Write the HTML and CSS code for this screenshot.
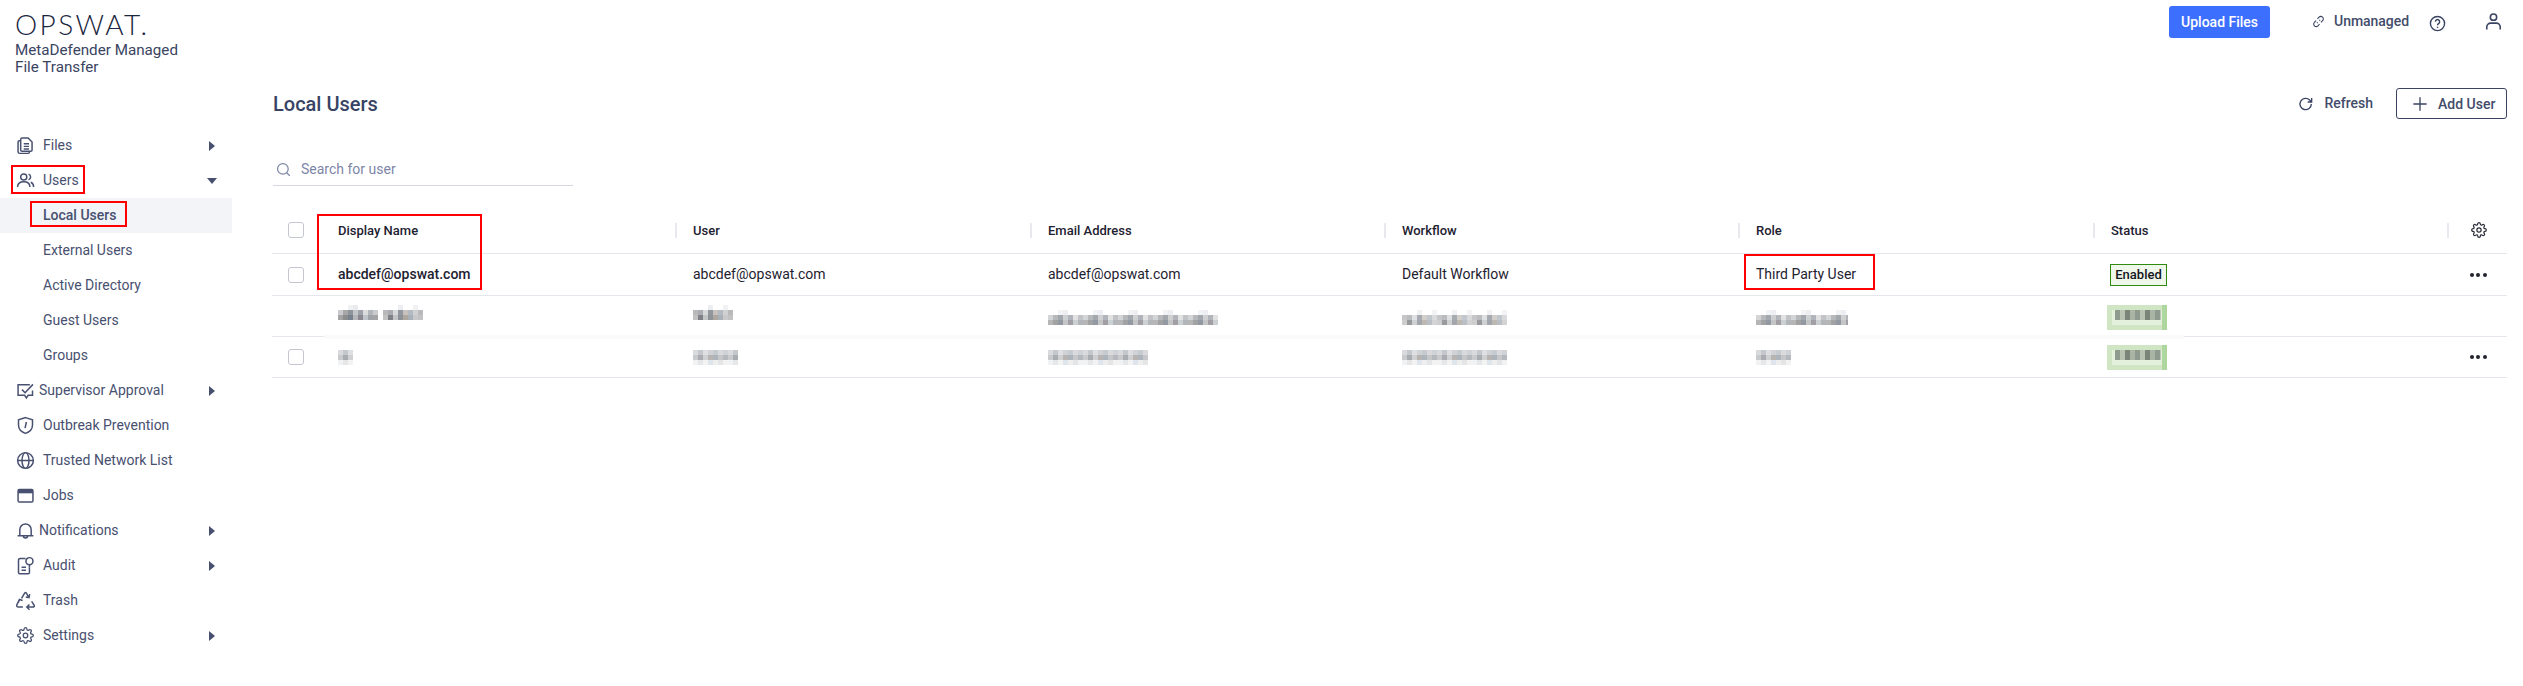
FILE: index.html
```html
<!DOCTYPE html>
<html lang="en">
<head>
<meta charset="utf-8">
<title>Local Users</title>
<link rel="stylesheet" href="styles.css">
</head>
<body>
<svg class="defs" width="0" height="0">
  <symbol id="gear" viewBox="0 0 24 24"><circle cx="12" cy="12" r="3.200"/><path d="M19.400 15a1.650 1.650 0 0 0 .33 1.820l.06.06a2 2 0 0 1 0 2.830 2 2 0 0 1-2.830 0l-.06-.06a1.650 1.650 0 0 0-1.820-.33 1.650 1.650 0 0 0-1 1.510V21a2 2 0 0 1-2 2 2 2 0 0 1-2-2v-.09A1.650 1.650 0 0 0 9 19.400a1.650 1.650 0 0 0-1.820.33l-.06.06a2 2 0 0 1-2.830 0 2 2 0 0 1 0-2.830l.06-.06a1.650 1.650 0 0 0 .33-1.820 1.650 1.650 0 0 0-1.510-1H3a2 2 0 0 1-2-2 2 2 0 0 1 2-2h.09A1.650 1.650 0 0 0 4.600 9a1.650 1.650 0 0 0-.33-1.820l-.06-.06a2 2 0 0 1 0-2.830 2 2 0 0 1 2.830 0l.06.06a1.650 1.650 0 0 0 1.820.33H9a1.650 1.650 0 0 0 1-1.510V3a2 2 0 0 1 2-2 2 2 0 0 1 2 2v.09a1.650 1.650 0 0 0 1 1.510 1.650 1.650 0 0 0 1.820-.33l.06-.06a2 2 0 0 1 2.830 0 2 2 0 0 1 0 2.830l-.06.06a1.650 1.650 0 0 0-.33 1.820V9a1.650 1.650 0 0 0 1.510 1H21a2 2 0 0 1 2 2 2 2 0 0 1-2 2h-.09a1.650 1.650 0 0 0-1.510 1z"/></symbol>
</svg>
<aside class="sidebar">
  <div class="brand">
    <div class="logo">OPSWAT.</div>
    <div class="product">MetaDefender Managed<br>File Transfer</div>
  </div>
  <nav class="nav">
    <a class="item"><svg class="ico" viewBox="0 0 24 24"><path d="M8 3.500h7l4.500 4.500v9a1.500 1.500 0 0 1-1.500 1.500H8A1.500 1.500 0 0 1 6.500 17V5A1.500 1.500 0 0 1 8 3.500z"/><path d="M6.500 6.500H5A1.500 1.500 0 0 0 3.500 8v11A2 2 0 0 0 5.500 21H15a1.500 1.500 0 0 0 1.500-1.500V18.500M10 10h6M10 13h6M10 16h6"/></svg><span>Files</span><i class="caret right"></i></a>
    <a class="item"><svg class="ico" viewBox="0 0 24 24"><circle cx="10" cy="8" r="3.500"/><path d="M3 19.500c0-4 3-6 7-6s7 2 7 6M15.500 4.700a3.500 3.500 0 0 1 0 6.600M18 14c2 .8 3.300 2.600 3.300 5.500"/></svg><span>Users</span><i class="caret down"></i></a>
    <a class="item sub active"><span>Local Users</span></a>
    <a class="item sub"><span>External Users</span></a>
    <a class="item sub"><span>Active Directory</span></a>
    <a class="item sub"><span>Guest Users</span></a>
    <a class="item sub"><span>Groups</span></a>
    <a class="item tight"><svg class="ico" viewBox="0 0 24 24"><path d="M20 12v5.500h-5l-2 3-2-3H3.500V5.500H17"/><path d="M8 11l3.500 3.500L20.500 5"/></svg><span>Supervisor Approval</span><i class="caret right"></i></a>
    <a class="item"><svg class="ico" viewBox="0 0 24 24"><path d="M12 3l8 2.500v6c0 5-3.500 8-8 9.500-4.500-1.500-8-4.500-8-9.500v-6z"/><path d="M13 8l-1.500 7"/></svg><span>Outbreak Prevention</span></a>
    <a class="item"><svg class="ico" viewBox="0 0 24 24"><circle cx="12" cy="12" r="9"/><ellipse cx="12" cy="12" rx="4" ry="9"/><path d="M3 12h18"/></svg><span>Trusted Network List</span></a>
    <a class="item"><svg class="ico" viewBox="0 0 24 24"><rect x="3.500" y="5" width="17" height="14.500" rx="1.500"/><path class="solid" d="M3.500 5h17v4.500h-17z"/></svg><span>Jobs</span></a>
    <a class="item tight"><svg class="ico" viewBox="0 0 24 24"><path d="M3 18h18M5.500 18v-7a6.500 6.500 0 0 1 13 0v7M9.500 18a2.500 2.500 0 0 0 5 0"/></svg><span>Notifications</span><i class="caret right"></i></a>
    <a class="item"><svg class="ico" viewBox="0 0 24 24"><path d="M12 4H6a2 2 0 0 0-2 2v14a1.500 1.500 0 0 0 1.500 1.500H15a1.500 1.500 0 0 0 1.500-1.500v-6M7.500 14h5M7.500 17.500h5"/><circle cx="16.500" cy="7" r="4"/><path d="M16.500 11v3"/></svg><span>Audit</span><i class="caret right"></i></a>
    <a class="item"><svg class="ico" viewBox="0 0 24 24"><path d="M7.500 9.500L11 3.500Q12 2 13 3.500L15.500 8M16.800 4.800L16 8.700L12.300 8M5 11L2 17Q1.500 19.500 4 19.500H9M3.800 14.300L5.200 10.800L8.700 12M19 13L22 17.500Q22.500 19.500 20 19.500H14M16.500 16.500L13.500 19.500L16.500 22.500"/></svg><span>Trash</span></a>
    <a class="item"><svg class="ico gear-nav"><use href="#gear"/></svg><span>Settings</span><i class="caret right"></i></a>
  </nav>
</aside>

<main class="main">
  <header class="topbar">
    <button class="upload">Upload Files</button>
    <span class="status-link"><svg class="small" viewBox="0 0 24 24"><path d="M10 7l3-3a4.500 4.500 0 0 1 6.500 0 4.500 4.500 0 0 1 0 6.500l-3 3M14 17l-3 3a4.500 4.500 0 0 1-6.500 0 4.500 4.500 0 0 1 0-6.500l3-3M9 15l1.500-1.500M13.500 10.500L15 9"/></svg>Unmanaged</span>
    <svg class="help" viewBox="0 0 24 24"><circle cx="12" cy="12" r="10"/><path d="M9 9.500a3 3 0 1 1 4.500 2.600c-1 .6-1.500 1.100-1.500 2.400"/><path class="solid" d="M11 16.500h2v2h-2z"/></svg>
    <svg class="person" viewBox="0 0 24 24"><circle cx="12" cy="6.500" r="4"/><path d="M3.500 22v-3a5 5 0 0 1 5-5h7a5 5 0 0 1 5 5v3"/></svg>
  </header>
  <div class="title-row">
    <h1>Local Users</h1>
    <div class="actions">
      <span class="refresh"><svg class="refresh-ico" viewBox="0 0 24 24"><path d="M20 12a8.500 8.500 0 1 1-2.500-6L20 8.500M20.500 3v6h-6"/></svg>Refresh</span>
      <button class="add"><svg class="plus" viewBox="0 0 24 24"><path d="M12 2v20M2 12h20"/></svg>Add User</button>
    </div>
  </div>
  <div class="search"><svg class="search-ico" viewBox="0 0 24 24"><circle cx="11" cy="11" r="8.500"/><path d="M17 17l5 5"/></svg><span>Search for user</span></div>

  <div class="table">
    <div class="row head">
      <div class="cell check"><i class="box"></i></div>
      <div class="cell first">Display Name</div>
      <div class="cell">User</div>
      <div class="cell">Email Address</div>
      <div class="cell">Workflow</div>
      <div class="cell">Role</div>
      <div class="cell">Status</div>
      <div class="cell tool"><svg class="gear-small"><use href="#gear"/></svg></div>
    </div>
    <div class="row r1">
      <div class="cell check"><i class="box"></i></div>
      <div class="cell first strong">abcdef@opswat.com</div>
      <div class="cell">abcdef@opswat.com</div>
      <div class="cell">abcdef@opswat.com</div>
      <div class="cell">Default Workflow</div>
      <div class="cell">Third Party User</div>
      <div class="cell"><b class="badge">Enabled</b></div>
      <div class="cell tool"><b class="dots"><i></i><i></i><i></i></b></div>
    </div>
    <div class="row r2">
      <div class="cell check"></div>
      <div class="cell first"><i class="mos a w40 high"></i><i class="mos b w40 gap high"></i></div>
      <div class="cell"><i class="mos b w40 high"></i></div>
      <div class="cell"><i class="mos a w170 low"></i></div>
      <div class="cell"><i class="mos b w105 low"></i></div>
      <div class="cell"><i class="mos a w92 low"></i></div>
      <div class="cell"><i class="blur-badge"></i></div>
      <div class="cell tool"></div>
    </div>
    <div class="row r3">
      <div class="cell check"><i class="box"></i></div>
      <div class="cell first"><i class="mos c w15"></i></div>
      <div class="cell"><i class="mos c w45"></i></div>
      <div class="cell"><i class="mos c w100"></i></div>
      <div class="cell"><i class="mos c w105"></i></div>
      <div class="cell"><i class="mos c w35"></i></div>
      <div class="cell"><i class="blur-badge"></i></div>
      <div class="cell tool"><b class="dots"><i></i><i></i><i></i></b></div>
    </div>
  </div>
</main>

<div class="mark m-users"></div>
<div class="mark m-local"></div>
<div class="mark m-name"></div>
<div class="mark m-role"></div>
</body>
</html>
```
FILE: styles.css
```css
* { box-sizing: border-box; }
html, body { margin: 0; height: 100%; }
body {
  display: flex;
  font: 14px/17px Roboto, "Liberation Sans", sans-serif;
  color: #485070;
  background: #fff;
  overflow: hidden;
  position: relative;
}
.defs { position: absolute; }
symbol { fill: none; stroke: currentColor; stroke-width: 1.8; }

/* sidebar */
.sidebar { width: 232px; flex: none; }
.brand { height: 128px; padding: 8px 0 0 15px; }
.logo {
  font: 300 28px/32px Lato, sans-serif;
  letter-spacing: 2.400px;
  color: #1a2540;
}
.product { margin-top: 2px; color: #3a4462; font-size: 15.200px; }
.item {
  display: flex;
  align-items: center;
  height: 35px;
  padding-left: 15px;
  color: #485070;
}
.item span { margin-left: 7px; }
.item.tight span { margin-left: 3px; }
.item.sub { padding-left: 43px; }
.item.sub span { margin-left: 0; }
.item.active { background: #f2f4f8; font-weight: 500; }
.ico {
  width: 21px;
  height: 21px;
  flex: none;
  fill: none;
  stroke: #485070;
  stroke-width: 1.7;
}
.ico.gear-nav { width: 17px; height: 17px; margin: 0 2px; color: #485070; }
.solid { fill: currentColor; stroke: none; color: #485070; }
.caret {
  margin-left: auto;
  width: 0;
  height: 0;
  border-style: solid;
  border-color: transparent;
}
.caret.right { margin-right: 17px; border-width: 5.500px 0 5.500px 6px; border-left-color: #485070; }
.caret.down { margin-right: 15px; border-width: 6px 5.500px 0; border-top-color: #485070; }

/* main */
.main { flex: 1; min-width: 0; padding: 0 16px 0 40px; }
.topbar {
  display: flex;
  align-items: flex-start;
  justify-content: flex-end;
  height: 88px;
  padding-top: 6px;
}
.upload {
  width: 101px;
  height: 32px;
  border: 0;
  border-radius: 3px;
  background: #3d6fff;
  color: #fff;
  font: 500 14px Roboto, sans-serif;
  padding: 0;
}
.status-link {
  display: flex;
  align-items: center;
  margin: 7px 0 0 41px;
  color: #434c6b;
  font-weight: 500;
  letter-spacing: -.05px;
  line-height: 17px;
}
.small { width: 13px; height: 13px; margin-right: 9px; margin-left: 1px; fill: none; stroke: #3a4462; stroke-width: 2; }
.help { width: 17px; height: 17px; margin: 9px 0 0 20px; fill: none; stroke: #3a4462; stroke-width: 2; }
.person { width: 19px; height: 19px; margin: 6px 4px 0 38px; fill: none; stroke: #3a4462; stroke-width: 2; }

.title-row {
  display: flex;
  align-items: flex-start;
  justify-content: space-between;
  height: 64px;
}
h1 {
  margin: 3px 0 0 1px;
  font: 500 20px/26px Roboto, sans-serif;
  color: #384364;
}
.actions { display: flex; align-items: flex-start; }
.refresh {
  display: flex;
  align-items: center;
  height: 31px;
  margin-right: 23px;
  color: #434c6b;
  font-weight: 500;
}
.refresh-ico { width: 16px; height: 16px; margin-right: 10px; fill: none; stroke: #3a4462; stroke-width: 2; }
.add {
  display: flex;
  align-items: center;
  width: 111px;
  height: 31px;
  padding: 0 0 0 15px;
  border: 1px solid #3a4462;
  border-radius: 3px;
  background: #fff;
  color: #434c6b;
  font: 500 14px Roboto, sans-serif;
}
.plus { width: 16px; height: 16px; margin-right: 10px; fill: none; stroke: #3a4462; stroke-width: 2; }

.search {
  display: flex;
  align-items: center;
  width: 300px;
  margin-left: 1px;
  height: 34px;
  padding: 2px 0 0 3px;
  border-bottom: 1px solid #d6d8e0;
  color: #7d86a6;
}
.search-ico { width: 15px; height: 15px; margin-right: 10px; fill: none; stroke: #7d86a6; stroke-width: 2; }

/* table */
.table { margin-top: 28px; color: #1e2130; }
.row {
  display: grid;
  grid-template-columns: 66px 337px 355px 354px 354px 355px 354px 60px;
  align-items: center;
  border-bottom: 1px solid #e6e7ec;
  position: relative;
}
.head { height: 40px; padding-bottom: 7px; font-size: 13px; font-weight: 500; }
.r1 { height: 42px; }
.r2 { height: 41px; }
.r2::after {
  content: "";
  position: absolute;
  left: 52px;
  right: 323px;
  bottom: -3px;
  height: 4px;
  background: #fafafa;
}
.r3 { height: 41px; }
.cell { display: flex; align-items: center; padding-left: 18px; min-width: 0; }
.head .cell:not(.check):not(.first) { border-left: 2px solid #e8e9ee; height: 15px; padding-left: 16px; }
.head .cell.tool:not(.check):not(.first) { padding-left: 22px; }
.cell.check { padding-left: 16px; }
.cell.first { padding-left: 0; }
.cell.first.strong { font-weight: 500; }
.cell.tool { padding-left: 22.500px; }
.box {
  display: block;
  width: 16px;
  height: 16px;
  border: 1px solid #c4c6d2;
  border-radius: 3px;
  background: #fff;
}
.gear-small { width: 16px; height: 16px; color: #2a2d3a; flex: none; }
.badge {
  display: flex;
  align-items: center;
  width: 57px;
  height: 22px;
  margin-left: -1px;
  justify-content: center;
  border: 1px solid #2f8a10;
  background: #eef7ea;
  font-size: 13px;
  font-weight: 500;
  color: #14161e;
}
.dots { display: flex; gap: 2.500px; }
.dots i { width: 4px; height: 4px; border-radius: 50%; background: #22242f; }

/* pixelated (redacted) content */
.mos {
  display: block;
  height: 15px;
  flex: none;
  background-repeat: no-repeat;
  background-size: 100% 5px;
  background-position: 0 0, 0 5px, 0 10px;
}
.mos.high { margin-bottom: 7px; }
.mos.low { margin-top: 3px; opacity: .8; }
.mos.gap { margin-left: 5px; }
.w15 { width: 15px; } .w35 { width: 35px; } .w40 { width: 40px; } .w45 { width: 45px; }
.w92 { width: 92px; } .w100 { width: 100px; } .w105 { width: 105px; } .w170 { width: 170px; }
.mos.a {
  background-image:
    repeating-linear-gradient(90deg, #fff 0 10px, #f0f1f3 10px 15px, #e8eaee 15px 20px, #fff 20px 35px),
    repeating-linear-gradient(90deg, #c9cbce 0 5px, #a6a7a9 5px 10px, #8d939b 10px 15px, #c3c5c8 15px 20px, #9ea2a9 20px 25px, #dcdcdc 25px 30px, #b2b5b9 30px 35px),
    repeating-linear-gradient(90deg, #a4a4a5 0 5px, #8a8c8e 5px 10px, #77808d 10px 15px, #b6b7b9 15px 20px, #8b8690 20px 25px, #bfc5c8 25px 30px, #9fa3a8 30px 35px);
}
.mos.b {
  background-image:
    repeating-linear-gradient(90deg, #fff 0 15px, #eceef1 15px 20px, #fff 20px 30px, #f1f1f3 30px 35px),
    repeating-linear-gradient(90deg, #b9b9bb 0 5px, #a9acb0 5px 10px, #d8d9db 10px 15px, #92969d 15px 20px, #c8c2be 20px 25px, #b3bac2 25px 30px, #d0d1d3 30px 35px),
    repeating-linear-gradient(90deg, #c2c2c3 0 5px, #7f8186 5px 10px, #c4c5c7 10px 15px, #8d9299 15px 20px, #ada79f 20px 25px, #a9b0b8 25px 30px, #c9c9cb 30px 35px);
}
.mos.c {
  background-image:
    repeating-linear-gradient(90deg, #d8dade 0 5px, #c4c7cb 5px 10px, #dddfe2 10px 15px, #d0d2d5 15px 20px, #c6cbd0 20px 25px, #dadadc 25px 30px, #cfd3d8 30px 35px),
    repeating-linear-gradient(90deg, #c9cacc 0 5px, #a9adb2 5px 10px, #cfd0d2 10px 15px, #b7b4b1 15px 20px, #aeb4bb 20px 25px, #c6c7c9 25px 30px, #b5b9be 30px 35px),
    repeating-linear-gradient(90deg, #f1f2f3 0 5px, #e6e7e9 5px 10px, #f3f3f4 10px 15px, #dfe5ec 15px 20px, #eeeeef 20px 25px, #e4e5e7 25px 30px, #f2f2f3 30px 35px);
}
.blur-badge {
  display: block;
  width: 60px;
  height: 25px;
  margin-left: -4px;
  background-color: #cfe5c3;
  background-image:
    repeating-linear-gradient(90deg, #8e9a8d 0 5px, #b8c3b2 5px 10px, #7a8478 10px 15px, #a9b5a4 15px 20px),
    linear-gradient(#e3f1dc, #e3f1dc),
    linear-gradient(#add79e, #add79e);
  background-repeat: no-repeat;
  background-size: 46px 10px, 50px 15px, 5px 100%;
  background-position: 8px 5px, 5px 5px, right 0 top 0;
}
.r2 .blur-badge { margin-top: 3px; }

/* annotation frames */
.mark { position: absolute; border: 2px solid #f00; pointer-events: none; }
.m-users { left: 11px; top: 165px; width: 74px; height: 29px; }
.m-local { left: 30px; top: 201px; width: 97px; height: 26px; }
.m-name { left: 317px; top: 214px; width: 165px; height: 76px; }
.m-role { left: 1744px; top: 254px; width: 131px; height: 36px; }
```
